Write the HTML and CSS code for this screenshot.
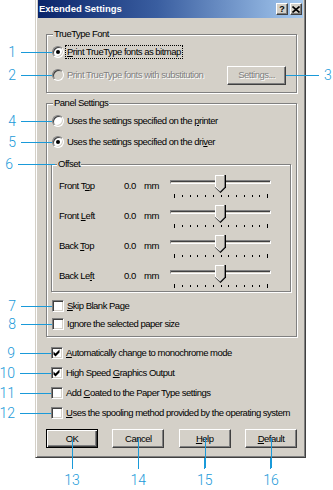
FILE: index.html
```html
<!DOCTYPE html>
<html>
<head>
<meta charset="utf-8">
<link rel="stylesheet" href="styles.css">
</head>
<body>
<div class="dialog">
  <div class="titlebar">
    <span class="title">Extended Settings</span>
    <span class="tb-btns">
      <span class="tb-btn">?</span>
      <span class="tb-btn"><svg width="8" height="7" viewBox="0 0 8 7"><path d="M0.5 0.5 L7.5 6.5 M7.5 0.5 L0.5 6.5" stroke="#000" stroke-width="1.6"/></svg></span>
    </span>
  </div>
  <div class="content">
    <fieldset class="group g-font">
      <legend>TrueType Font</legend>
      <div class="opt first">
        <span class="radio on"><span class="callout"><span class="num">1</span><span class="lead"></span></span></span>
        <span class="label focus"><u>P</u>rint TrueType fonts as bitmap</span>
      </div>
      <div class="opt tall">
        <span class="radio dis"><span class="callout"><span class="num">2</span><span class="lead"></span></span></span>
        <span class="label disabled">Print TrueType fonts with substitution</span>
        <span class="btn wide disabled">Settings...<span class="callout right"><span class="lead"></span><span class="num">3</span></span></span>
      </div>
    </fieldset>

    <fieldset class="group g-panel">
      <legend>Panel Settings</legend>
      <div class="opt first">
        <span class="radio"><span class="callout"><span class="num">4</span><span class="lead"></span></span></span>
        <span class="label">Uses the settings specified on the <u>p</u>rinter</span>
      </div>
      <div class="opt">
        <span class="radio on"><span class="callout"><span class="num">5</span><span class="lead"></span></span></span>
        <span class="label">Uses the settings specified on the dri<u>v</u>er</span>
      </div>

      <fieldset class="group g-offset">
        <legend><span class="callout legend-callout"><span class="num">6</span><span class="lead"></span></span>Offset</legend>
        <div class="orow">
          <span class="olabel">Front T<u>o</u>p</span><span class="oval">0.0</span><span class="ounit">mm</span>
          <span class="slider"><span class="track"></span><span class="ticks"><i class="tick end"></i><i class="tick"></i><i class="tick"></i><i class="tick"></i><i class="tick"></i><i class="tick"></i><i class="tick"></i><i class="tick"></i><i class="tick"></i><i class="tick"></i><i class="tick"></i><i class="tick"></i><i class="tick end"></i></span><svg class="thumb" width="11" height="18" viewBox="0 0 11 18"><path d="M0 0H11V12.5L5.5 18L0 12.5Z" fill="#000"/><path d="M0 0H10V12L5 17L0 12Z" fill="#808080"/><path d="M0 0H9V12L5 16L0 12Z" fill="#fff"/><path d="M1 1H9V11.6L5 15.6L1 11.6Z" fill="#D4D0C8"/></svg></span>
        </div>
        <div class="orow">
          <span class="olabel">Front <u>L</u>eft</span><span class="oval">0.0</span><span class="ounit">mm</span>
          <span class="slider"><span class="track"></span><span class="ticks"><i class="tick end"></i><i class="tick"></i><i class="tick"></i><i class="tick"></i><i class="tick"></i><i class="tick"></i><i class="tick"></i><i class="tick"></i><i class="tick"></i><i class="tick"></i><i class="tick"></i><i class="tick"></i><i class="tick end"></i></span><svg class="thumb" width="11" height="18" viewBox="0 0 11 18"><path d="M0 0H11V12.5L5.5 18L0 12.5Z" fill="#000"/><path d="M0 0H10V12L5 17L0 12Z" fill="#808080"/><path d="M0 0H9V12L5 16L0 12Z" fill="#fff"/><path d="M1 1H9V11.6L5 15.6L1 11.6Z" fill="#D4D0C8"/></svg></span>
        </div>
        <div class="orow">
          <span class="olabel">Back <u>T</u>op</span><span class="oval">0.0</span><span class="ounit">mm</span>
          <span class="slider"><span class="track"></span><span class="ticks"><i class="tick end"></i><i class="tick"></i><i class="tick"></i><i class="tick"></i><i class="tick"></i><i class="tick"></i><i class="tick"></i><i class="tick"></i><i class="tick"></i><i class="tick"></i><i class="tick"></i><i class="tick"></i><i class="tick end"></i></span><svg class="thumb" width="11" height="18" viewBox="0 0 11 18"><path d="M0 0H11V12.5L5.5 18L0 12.5Z" fill="#000"/><path d="M0 0H10V12L5 17L0 12Z" fill="#808080"/><path d="M0 0H9V12L5 16L0 12Z" fill="#fff"/><path d="M1 1H9V11.6L5 15.6L1 11.6Z" fill="#D4D0C8"/></svg></span>
        </div>
        <div class="orow">
          <span class="olabel">Back Le<u>f</u>t</span><span class="oval">0.0</span><span class="ounit">mm</span>
          <span class="slider"><span class="track"></span><span class="ticks"><i class="tick end"></i><i class="tick"></i><i class="tick"></i><i class="tick"></i><i class="tick"></i><i class="tick"></i><i class="tick"></i><i class="tick"></i><i class="tick"></i><i class="tick"></i><i class="tick"></i><i class="tick"></i><i class="tick end"></i></span><svg class="thumb" width="11" height="18" viewBox="0 0 11 18"><path d="M0 0H11V12.5L5.5 18L0 12.5Z" fill="#000"/><path d="M0 0H10V12L5 17L0 12Z" fill="#808080"/><path d="M0 0H9V12L5 16L0 12Z" fill="#fff"/><path d="M1 1H9V11.6L5 15.6L1 11.6Z" fill="#D4D0C8"/></svg></span>
        </div>
      </fieldset>

      <div class="opt chk c7">
        <span class="check"><span class="callout"><span class="num">7</span><span class="lead"></span></span></span>
        <span class="label"><u>S</u>kip Blank Page</span>
      </div>
      <div class="opt chk c8">
        <span class="check"><span class="callout"><span class="num">8</span><span class="lead"></span></span></span>
        <span class="label">I<u>g</u>nore the selected paper size</span>
      </div>
    </fieldset>

    <div class="checks">
      <div class="opt chk">
        <span class="check"><svg class="tick-mark" width="10" height="10" viewBox="0 0 10 10"><path d="M1.5 3.5L3.5 5.5L7.5 1.5V4.5L3.5 8.5L1.5 6.5Z" fill="#000"/></svg><span class="callout"><span class="num">9</span><span class="lead"></span></span></span>
        <span class="label"><u>A</u>utomatically change to monochrome mode</span>
      </div>
      <div class="opt chk">
        <span class="check"><svg class="tick-mark" width="10" height="10" viewBox="0 0 10 10"><path d="M1.5 3.5L3.5 5.5L7.5 1.5V4.5L3.5 8.5L1.5 6.5Z" fill="#000"/></svg><span class="callout"><span class="num">10</span><span class="lead"></span></span></span>
        <span class="label">High Speed <u>G</u>raphics Output</span>
      </div>
      <div class="opt chk">
        <span class="check"><span class="callout"><span class="num">11</span><span class="lead"></span></span></span>
        <span class="label">Add <u>C</u>oated to the Paper Type settings</span>
      </div>
      <div class="opt chk">
        <span class="check"><span class="callout"><span class="num">12</span><span class="lead"></span></span></span>
        <span class="label"><u>U</u>ses the spooling method provided by the operating system</span>
      </div>
    </div>

    <div class="buttons">
      <span class="btn default">OK</span>
      <span class="btn">Cancel</span>
      <span class="btn"><u>H</u>elp</span>
      <span class="btn"><u>D</u>efault</span>
    </div>
  </div>
</div>
<div class="bottom-callouts">
  <span class="bc"><span class="bc-line"></span><span class="bc-num">13</span></span>
  <span class="bc"><span class="bc-line"></span><span class="bc-num">14</span></span>
  <span class="bc"><span class="bc-line"></span><span class="bc-num">15</span></span>
  <span class="bc"><span class="bc-line"></span><span class="bc-num">16</span></span>
</div>
</body>
</html>
```

FILE: styles.css
```css
* { box-sizing: border-box; }

body {
  margin: 0;
  background: #fff;
  color: #000;
  font: 9.5px/12px "Liberation Sans", Arial, sans-serif;
  letter-spacing: -0.5px;
}

u { text-decoration: underline; text-underline-offset: 1px; }

.dialog {
  width: 271px;
  height: 458px;
  margin-left: 35px;
  background: #D4D0C8;
  border: 1px solid;
  border-top: 0;
  border-color: #D4D0C8 #404040 #404040 #D4D0C8;
  box-shadow: inset 1px 0 #fff, inset -1px -1px #808080;
  padding: 0 2px;
}

.titlebar {
  height: 18px;
  display: flex;
  align-items: center;
  justify-content: space-between;
  padding: 0 1px 0 1px;
  background: linear-gradient(90deg, #0A246A 0%, #3a5ea0 45%, #A6CAF0 100%);
}

.title {
  color: #fff;
  font: bold 9.5px/12px "Liberation Sans", Arial, sans-serif;
  letter-spacing: 0;
}

.tb-btns { display: flex; gap: 2px; }

.tb-btn {
  width: 12px;
  height: 12px;
  display: flex;
  align-items: center;
  justify-content: center;
  background: #D4D0C8;
  border: 1px solid;
  border-color: #fff #404040 #404040 #fff;
  box-shadow: inset -1px -1px #808080;
  font: bold 9px/1 "Liberation Sans", Arial, sans-serif;
  letter-spacing: 0;
}

.content { padding: 0 6px 0 8px; }

.group {
  margin: 0;
  min-width: 0;
  border: 1px solid #808080;
  box-shadow: 1px 1px 0 #fff, inset 1px 1px 0 #fff;
}

.group legend {
  padding: 0 1px;
  line-height: 12px;
  background: #D4D0C8;
}

.g-font { margin-top: 10px; padding: 0 10px 7px 5px; }
.g-font legend { margin-left: 1px; }

.g-panel { margin-top: 4px; padding: 0 5px 4px 4px; }
.g-panel legend { margin-left: 2px; }
.g-panel > .opt { padding-left: 1px; }

.g-offset { margin-top: 8px; padding: 1px 0 0 7px; }
.g-offset legend { margin-left: -2px; position: relative; }

.opt {
  height: 16px;
  display: flex;
  align-items: center;
  margin-top: 5px;
}
.opt.first { margin-top: 4px; }
.opt.tall { height: 20px; }

.label { margin-left: 3px; white-space: nowrap; }
.label.focus { outline: 1px dotted #000; outline-offset: 0; padding: 0 1px; margin-left: 2px; }
.label.disabled { color: #808080; text-shadow: 1px 1px 0 #fff; }

.radio {
  position: relative;
  flex: none;
  width: 12px;
  height: 12px;
  border-radius: 50%;
  background: #fff;
  border: 1px solid;
  border-color: #808080 #fff #fff #808080;
  box-shadow: inset 1px 1px #404040, inset -1px -1px #D4D0C8;
}
.radio.on::after {
  content: "";
  position: absolute;
  left: 3px;
  top: 3px;
  width: 4px;
  height: 4px;
  border-radius: 50%;
  background: #000;
}
.radio.dis { background: #D4D0C8; }

.check {
  position: relative;
  flex: none;
  width: 12px;
  height: 12px;
  background: #fff;
  border: 1px solid;
  border-color: #808080 #fff #fff #808080;
  box-shadow: inset 1px 1px #404040, inset -1px -1px #D4D0C8;
}
.tick-mark { display: block; }

.c7 { margin-top: 6px; }
.c8 { margin-top: 2px; }

.checks { margin-top: 8px; margin-left: 5px; }
.checks .opt { margin-top: 4px; }
.checks .opt:first-child { margin-top: 0; }

/* Offset sliders */
.orow { height: 30px; display: flex; align-items: center; }
.olabel { width: 65px; }
.oval { width: 20px; }
.ounit { width: 26px; }

.slider {
  position: relative;
  width: 101px;
  height: 23px;
  display: flex;
  flex-direction: column;
}
.track {
  margin-top: 5px;
  height: 4px;
  border: 1px solid;
  border-color: #808080 #fff #fff #808080;
  box-shadow: inset 0 1px #404040;
}
.ticks {
  margin-top: 10px;
  height: 4px;
  display: flex;
  align-items: center;
  justify-content: space-between;
  padding: 0 3px 0 4px;
}
.tick { display: block; width: 1px; height: 2px; background: #000; }
.tick.end { height: 4px; }
.thumb { position: absolute; left: 45px; top: 0; }

/* Buttons */
.buttons {
  margin-top: 8px;
  display: flex;
  justify-content: space-between;
}
.btn {
  position: relative;
  width: 52px;
  height: 19px;
  display: flex;
  align-items: center;
  justify-content: center;
  background: #D4D0C8;
  border: 1px solid;
  border-color: #fff #404040 #404040 #fff;
  box-shadow: inset -1px -1px #808080;
}
.buttons .btn::after {
  content: "";
  position: absolute;
  left: 50%;
  top: 8px;
  width: 1px;
  height: 30px;
  background: #1a9ad9;
}
.btn.default {
  border-color: #000;
  box-shadow: inset 1px 1px #fff, inset -1px -1px #404040, inset -2px -2px #808080;
}
.btn.wide { width: 59px; margin-left: auto; }
.btn.disabled { color: #808080; text-shadow: 1px 1px 0 #fff; }

/* Callouts */
.callout {
  position: absolute;
  top: 50%;
  right: 100%;
  margin-right: 1px;
  height: 0;
  display: flex;
  align-items: center;
  color: #1a9ad9;
  text-shadow: none;
  letter-spacing: 0;
}
.callout .num,
.bc-num {
  font: 300 14px/16px Roboto, "DejaVu Sans", sans-serif;
  letter-spacing: 0;
}
.callout .lead {
  width: 31px;
  height: 1px;
  background: currentColor;
  margin-left: 5px;
}
.legend-callout { margin-right: 2px; }
.legend-callout .lead { width: 37px; }

.callout.right {
  left: 100%;
  right: auto;
  margin: 0 0 0 1px;
}
.callout.right .lead { width: 33px; margin: 0 5px 0 0; }

.bottom-callouts {
  width: 251px;
  margin-left: 46px;
  display: flex;
  justify-content: space-between;
  color: #1a9ad9;
}
.bc {
  width: 52px;
  display: flex;
  flex-direction: column;
  align-items: center;
}
.bc-line { display: block; width: 1px; height: 11px; background: currentColor; }
.bc-num { display: block; margin-top: 3px; }
```
